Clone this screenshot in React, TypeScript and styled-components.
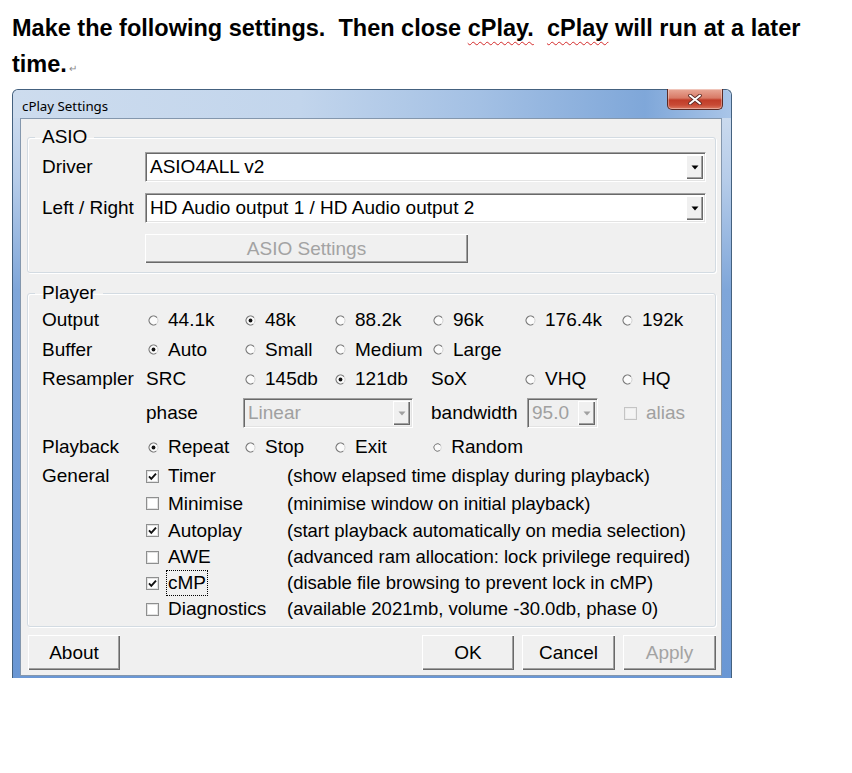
import { createGlobalStyle, styled } from "styled-components";

const GlobalStyle = createGlobalStyle`
  html, body {
    margin: 0;
    padding: 0;
    background: #fff;
  }
  body {
    font-family: "Liberation Sans", Arial, sans-serif;
  }
`;

const Page = styled.div`
  width: 852px;
  height: 773px;
  padding: 10px 0 0 12px;
  box-sizing: border-box;
`;

const Instruction = styled.p`
  margin: 0;
  height: 72px;
  font-size: 23.5px;
  font-weight: bold;
  line-height: 36px;
  color: #000;
  white-space: pre;
`;

const Squiggle = styled.span`
  text-decoration: underline wavy #d42a2a;
  text-decoration-thickness: 1px;
  text-underline-offset: 5px;
`;

const ParaMark = styled.span`
  font-size: 10px;
  line-height: 10px;
  font-weight: normal;
  color: #8a8a8a;
  margin-left: 2px;
`;

const Window = styled.div`
  margin-top: 7px;
  width: 720px;
  box-sizing: border-box;
  border: 1px solid #44617f;
  border-bottom: none;
  border-radius: 6px 6px 0 0;
  padding: 0 9px 2px 7px;
  display: flex;
  flex-direction: column;
  background: linear-gradient(180deg, #d3e0f0 0px, #b6cce9 90px, #7fa6d9 200px, #6a97d4 100%);
`;

const TitleBar = styled.div`
  height: 28px;
  margin: 0 -9px 0 -7px;
  padding: 0 8px 0 9px;
  display: flex;
  align-items: flex-start;
  justify-content: space-between;
  background: linear-gradient(90deg, #cddcee 0%, #c2d5ec 40%, #a3c0e4 65%, #7fa7d9 88%, #a9c5e8 100%);
  border-radius: 6px 6px 0 0;
`;

const Title = styled.span`
  padding-top: 7px;
  font-family: "Noto Sans", "Open Sans", sans-serif;
  font-size: 13.3px;
  color: #000;
`;

const CloseButton = styled.div`
  width: 56px;
  height: 21px;
  margin-top: -1px;
  box-sizing: border-box;
  border: 1px solid #5b2a24;
  border-top: none;
  border-radius: 0 0 5px 5px;
  background: linear-gradient(180deg, #e9a998 0%, #d87a66 45%, #c13c28 55%, #c84a35 80%, #dc7a62 100%);
  box-shadow: inset 0 0 0 1px rgba(255, 255, 255, 0.35);
  display: flex;
  align-items: center;
  justify-content: center;
`;

const Client = styled.div`
  background: #f0f0f0;
  border: 1px solid #8497ad;
  padding: 8px 5px 5px 6px;
  display: flex;
  flex-direction: column;
`;

const Group = styled.fieldset<{ $top?: number }>`
  margin: ${(p) => p.$top ?? 0}px 0 0 0;
  padding: 0 9px 0 14px;
  border: 1px solid #d3dbe2;
  border-radius: 3px;
  box-shadow: inset 1px 1px 0 #fff, 1px 1px 0 #fff;
  min-width: 0;
`;

const Legend = styled.legend`
  padding: 0 7px;
  margin-left: -7px;
  font-size: 19px;
  line-height: 20px;
  color: #000;
`;

const AsioBody = styled.div`
  padding: 5px 0 9px 0;
  display: grid;
  grid-template-columns: 103px 1fr;
  row-gap: 11px;
  align-items: center;
`;

const Label = styled.span<{ $disabled?: boolean }>`
  font-size: 19px;
  color: ${(p) => (p.$disabled ? "#a0a0a0" : "#000")};
  white-space: nowrap;
`;

const Description = styled.span`
  font-size: 18.5px;
  color: #000;
  white-space: nowrap;
`;

const Combo = styled.div<{ $disabled?: boolean; $width?: string }>`
  width: ${(p) => p.$width ?? "auto"};
  height: 30px;
  box-sizing: border-box;
  display: flex;
  align-items: stretch;
  background: ${(p) => (p.$disabled ? "#f0f0f0" : "#fff")};
  border-top: 1px solid #a0a0a0;
  border-left: 1px solid #a0a0a0;
  border-right: 1px solid #fff;
  border-bottom: 1px solid #fff;
  box-shadow: inset 1px 1px 0 #696969, inset -1px -1px 0 #e3e3e3;
  padding: 2px;
  font-size: 19px;
  color: ${(p) => (p.$disabled ? "#a0a0a0" : "#000")};
`;

const ComboText = styled.span`
  flex: 1;
  display: flex;
  align-items: center;
  padding-left: 2px;
  white-space: nowrap;
  overflow: hidden;
`;

const DropButton = styled.span`
  width: 17px;
  background: #f0f0f0;
  box-shadow: inset 1px 1px 0 #fff, inset -1px -1px 0 #696969, inset -2px -2px 0 #a0a0a0;
  display: flex;
  align-items: center;
  justify-content: center;
`;

const Button = styled.div<{ $disabled?: boolean; $width: number; $height?: number }>`
  width: ${(p) => p.$width}px;
  height: ${(p) => p.$height ?? 35}px;
  box-sizing: border-box;
  background: #f0f0f0;
  box-shadow: inset 1px 1px 0 #fff, inset -1px -1px 0 #696969, inset -2px -2px 0 #a0a0a0;
  display: flex;
  align-items: center;
  justify-content: center;
  font-size: 19px;
  color: ${(p) => (p.$disabled ? "#a3a3a3" : "#000")};
`;

const PlayerBody = styled.div`
  padding: 2px 0 4px 0;
  display: flex;
  flex-direction: column;
`;

const Row = styled.div<{ $h: number; $general?: boolean }>`
  height: ${(p) => p.$h}px;
  display: grid;
  grid-template-columns: ${(p) =>
    p.$general ? "104px 141px 1fr" : "104px 97px 90px 98px 92px 97px 1fr"};
  align-items: center;
`;

const Option = styled.span<{ $disabled?: boolean }>`
  display: inline-flex;
  align-items: center;
  gap: 9px;
  padding-left: 2px;
  font-size: 19px;
  white-space: nowrap;
  color: ${(p) => (p.$disabled ? "#a0a0a0" : "#000")};
`;

const Check = styled.span<{ $disabled?: boolean }>`
  display: inline-flex;
  align-items: center;
  gap: 9px;
  font-size: 19px;
  white-space: nowrap;
  color: ${(p) => (p.$disabled ? "#a0a0a0" : "#000")};
`;

const Focus = styled.span`
  outline: 1px dotted #000;
  outline-offset: 1px;
`;

const Indent = styled.span`
  padding-left: 4px;
`;

const ButtonRow = styled.div`
  margin-top: 8px;
  padding: 0 0 0 1px;
  display: flex;
  gap: 8px;
`;

const Spacer = styled.div`
  flex: 1;
`;

function Arrow({ disabled }: { disabled?: boolean }) {
  return (
    <svg width="8" height="5" viewBox="0 0 8 5">
      <path d="M0.5 0.5 L7.5 0.5 L4 4.5 Z" fill={disabled ? "#a0a0a0" : "#000"} />
    </svg>
  );
}

function Radio({ checked, label }: { checked?: boolean; label: string }) {
  return (
    <Option>
      <svg width="11" height="11" viewBox="0 0 11 11">
        <circle cx="5.5" cy="5.5" r="4.5" fill="#fbfbfb" stroke="#d2d2d2" strokeWidth="1" />
        <path d="M9 2.6 A4.5 4.5 0 1 0 8.2 9.1" fill="none" stroke="#7a7a7a" strokeWidth="1.1" />
        {checked && <circle cx="5.5" cy="5.5" r="1.9" fill="#111" />}
      </svg>
      {label}
    </Option>
  );
}

function CheckBox({ checked, label, disabled, focused }: { checked?: boolean; label: string; disabled?: boolean; focused?: boolean }) {
  return (
    <Check $disabled={disabled}>
      <svg width="13" height="13" viewBox="0 0 13 13">
        <rect x="0.5" y="0.5" width="12" height="12" fill={disabled ? "#f4f4f4" : "#fff"} stroke={disabled ? "#c4c4c4" : "#8e8f8f"} />
        <rect x="1.5" y="1.5" width="10" height="10" fill="none" stroke={disabled ? "#ececec" : "#e2e2e2"} />
        {checked && <path d="M3 6.3 L5.3 8.8 L10 3.6" fill="none" stroke="#111" strokeWidth="1.9" />}
      </svg>
      {focused ? <Focus>{label}</Focus> : label}
    </Check>
  );
}

const generalRows = [
  { label: "Timer", checked: true, h: 28, desc: "(show elapsed time display during playback)" },
  { label: "Minimise", checked: false, h: 27, desc: "(minimise window on initial playback)" },
  { label: "Autoplay", checked: true, h: 27, desc: "(start playback automatically on media selection)" },
  { label: "AWE", checked: false, h: 26, desc: "(advanced ram allocation: lock privilege required)" },
  { label: "cMP", checked: true, h: 26, desc: "(disable file browsing to prevent lock in cMP)", focused: true },
  { label: "Diagnostics", checked: false, h: 26, desc: "(available 2021mb, volume -30.0db, phase 0)" },
];

export default function App() {
  return (
    <Page>
      <GlobalStyle />
      <Instruction>
        {"Make the following settings.  Then close "}
        <Squiggle>cPlay.</Squiggle>
        {"  "}
        <Squiggle>cPlay</Squiggle>
        {" will run at a later"}
        <br />
        {"time."}
        <ParaMark>↵</ParaMark>
      </Instruction>

      <Window>
        <TitleBar>
          <Title>cPlay Settings</Title>
          <CloseButton>
            <svg width="14" height="11" viewBox="0 0 14 11">
              <path d="M2 1.5 L12 9.5 M12 1.5 L2 9.5" stroke="#5a2a25" strokeWidth="3.6" strokeLinecap="round" />
              <path d="M2 1.5 L12 9.5 M12 1.5 L2 9.5" stroke="#fff" strokeWidth="2" strokeLinecap="round" />
            </svg>
          </CloseButton>
        </TitleBar>

        <Client>
          <Group>
            <Legend>ASIO</Legend>
            <AsioBody>
              <Label>Driver</Label>
              <Combo>
                <ComboText>ASIO4ALL v2</ComboText>
                <DropButton><Arrow /></DropButton>
              </Combo>
              <Label>Left / Right</Label>
              <Combo>
                <ComboText>HD Audio output 1 / HD Audio output 2</ComboText>
                <DropButton><Arrow /></DropButton>
              </Combo>
              <span />
              <Button $disabled $width={323} $height={29}>ASIO Settings</Button>
            </AsioBody>
          </Group>

          <Group $top={10}>
            <Legend>Player</Legend>
            <PlayerBody>
              <Row $h={30}>
                <Label>Output</Label>
                <Radio label="44.1k" />
                <Radio label="48k" checked />
                <Radio label="88.2k" />
                <Radio label="96k" />
                <Radio label="176.4k" />
                <Radio label="192k" />
              </Row>
              <Row $h={29}>
                <Label>Buffer</Label>
                <Radio label="Auto" checked />
                <Radio label="Small" />
                <Radio label="Medium" />
                <Radio label="Large" />
              </Row>
              <Row $h={30}>
                <Label>Resampler</Label>
                <Label>SRC</Label>
                <Radio label="145db" />
                <Radio label="121db" checked />
                <Label>SoX</Label>
                <Radio label="VHQ" />
                <Radio label="HQ" />
              </Row>
              <Row $h={38}>
                <span />
                <Label>phase</Label>
                <Combo $disabled $width="170px" style={{ gridColumn: "3 / span 2" }}>
                  <ComboText>Linear</ComboText>
                  <DropButton><Arrow disabled /></DropButton>
                </Combo>
                <Label>bandwidth</Label>
                <Indent>
                  <Combo $disabled $width="71px">
                    <ComboText>95.0</ComboText>
                    <DropButton><Arrow disabled /></DropButton>
                  </Combo>
                </Indent>
                <Indent>
                  <CheckBox label="alias" disabled />
                </Indent>
              </Row>
              <Row $h={30}>
                <Label>Playback</Label>
                <Radio label="Repeat" checked />
                <Radio label="Stop" />
                <Radio label="Exit" />
                <Radio label="Random" />
              </Row>
              {generalRows.map((r, i) => (
                <Row $h={r.h} $general key={r.label}>
                  <Label>{i === 0 ? "General" : ""}</Label>
                  <CheckBox label={r.label} checked={r.checked} focused={r.focused} />
                  <Description>{r.desc}</Description>
                </Row>
              ))}
            </PlayerBody>
          </Group>

          <ButtonRow>
            <Button $width={92}>About</Button>
            <Spacer />
            <Button $width={92}>OK</Button>
            <Button $width={93}>Cancel</Button>
            <Button $disabled $width={93}>Apply</Button>
          </ButtonRow>
        </Client>
      </Window>
    </Page>
  );
}
